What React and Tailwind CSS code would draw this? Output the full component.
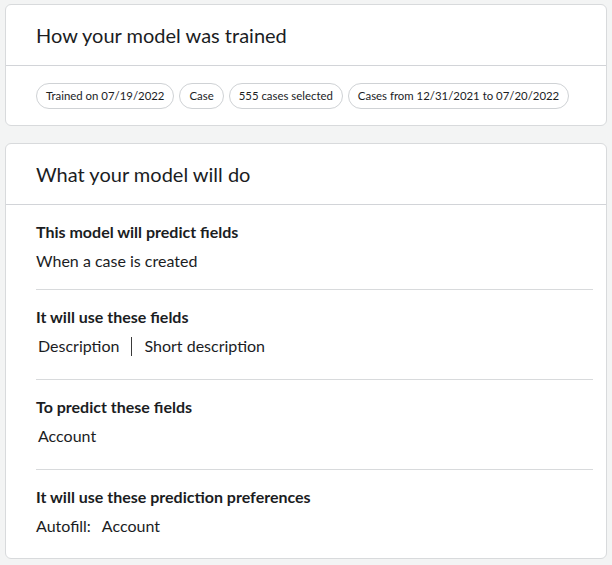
export default function App() {
  const chips = [
    "Trained on 07/19/2022",
    "Case",
    "555 cases selected",
    "Cases from 12/31/2021 to 07/20/2022",
  ];
  return (
    <div
      className="w-[612px] h-[565px] bg-[#f3f4f4] pl-[5px] pr-[5px] pt-[4px] text-[#1b1d1f]"
      style={{ fontFamily: "Lato, 'Open Sans', sans-serif" }}
    >
      <div className="bg-white border border-[#d8dadc] rounded-[6px]">
        <div className="h-[61px] flex items-center pl-[30px] border-b border-[#d2d4d8]">
          <h2 className="text-[20px] leading-none">How your model was trained</h2>
        </div>
        <div className="h-[59px] flex items-center gap-[5px] pl-[30px]">
          {chips.map((c) => (
            <span
              key={c}
              className="h-[26px] flex items-center px-[9px] rounded-full border border-[#cfd2d5] text-[11.4px]"
            >
              {c}
            </span>
          ))}
        </div>
      </div>

      <div className="mt-[17px] bg-white border border-[#d8dadc] rounded-[6px] h-[416px]">
        <div className="h-[61px] flex items-center pl-[30px] border-b border-[#d2d4d8]">
          <h2 className="text-[20px] leading-none">What your model will do</h2>
        </div>
        <div className="pl-[30px] pr-[13px]">
          <Section title="This model will predict fields" h="h-[85px]">
            <div>When a case is created</div>
          </Section>
          <Section title="It will use these fields" h="h-[90px]">
            <div className="flex items-center pl-[2px]">
              <span>Description</span>
              <span className="mx-[12px] w-px h-[19px] bg-[#3a3a3a]" />
              <span>Short description</span>
            </div>
          </Section>
          <Section title="To predict these fields" h="h-[90px]">
            <div className="pl-[2px]">Account</div>
          </Section>
          <Section title="It will use these prediction preferences" h="h-[90px]" last>
            <div>
              Autofill:<span className="ml-[11px]">Account</span>
            </div>
          </Section>
        </div>
      </div>
    </div>
  );
}

function Section({ title, children, last, h }) {
  return (
    <div
      className={
        h + " pt-[17px] " + (last ? "" : "border-b border-[#d8dadc]")
      }
    >
      <div className="text-[16px] font-bold leading-[20px]">{title}</div>
      <div className="mt-[9px] text-[16px] leading-[20px]">{children}</div>
    </div>
  );
}
